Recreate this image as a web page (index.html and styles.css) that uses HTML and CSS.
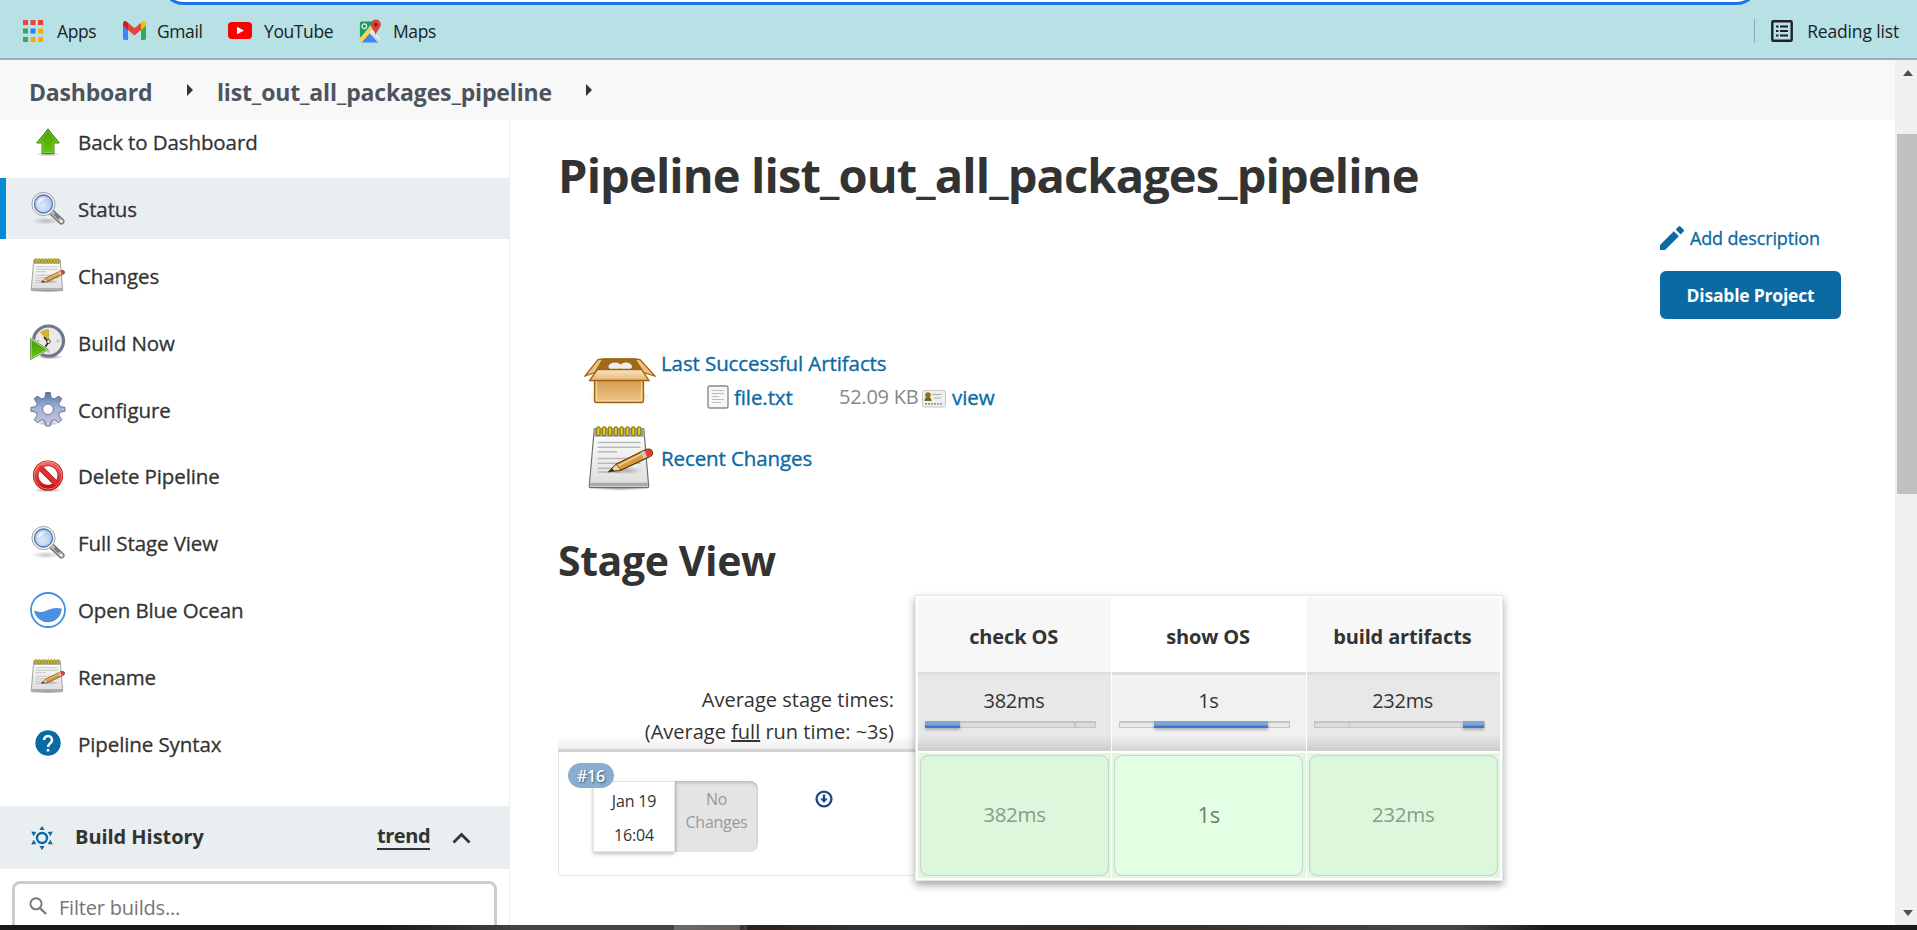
FILE: index.html
```html
<!DOCTYPE html>
<html lang="en">
<head>
<meta charset="utf-8">
<title>list_out_all_packages_pipeline [Jenkins]</title>
<link rel="stylesheet" href="styles.css">
</head>
<body>
<svg class="defs" width="0" height="0">
  <defs>
    <linearGradient id="gGreen" x1="0" y1="0" x2="0" y2="1"><stop offset="0" stop-color="#4b9a08"/><stop offset="1" stop-color="#62c808"/></linearGradient>
    <linearGradient id="gPaper" x1="0" y1="0" x2="0" y2="1"><stop offset="0" stop-color="#ffffff"/><stop offset="1" stop-color="#dcdcdc"/></linearGradient>
    <linearGradient id="gGear" x1="0" y1="0" x2="0" y2="1"><stop offset="0" stop-color="#5577a8"/><stop offset=".45" stop-color="#a0b2d4"/><stop offset="1" stop-color="#cfc2e6"/></linearGradient>
    <linearGradient id="gRed" x1="0" y1="0" x2="0" y2="1"><stop offset="0" stop-color="#f06a6a"/><stop offset="1" stop-color="#cc1010"/></linearGradient>
    <linearGradient id="gBox" x1="0" y1="0" x2="0" y2="1"><stop offset="0" stop-color="#c88f3c"/><stop offset="1" stop-color="#efc58a"/></linearGradient>
    <linearGradient id="gFlap" x1="0" y1="0" x2="0" y2="1"><stop offset="0" stop-color="#fbe6c6"/><stop offset="1" stop-color="#e6b673"/></linearGradient>
    <radialGradient id="gLens" cx=".45" cy=".6" r=".6"><stop offset="0" stop-color="#dfeafa"/><stop offset="1" stop-color="#a9c4e8"/></radialGradient>
    <radialGradient id="gShade"><stop offset="0" stop-color="#000" stop-opacity=".4"/><stop offset="1" stop-color="#000" stop-opacity="0"/></radialGradient>
    <symbol id="magnifier" viewBox="0 0 36 36">
      <ellipse cx="16" cy="30" rx="15" ry="3.6" fill="url(#gShade)" opacity=".55"/>
      <path d="M22 21.5 31.5 30.5" stroke="#6f6f6f" stroke-width="6" stroke-linecap="round"/>
      <path d="M22 21.5 31.5 30.5" stroke="#bdbdbd" stroke-width="3.6" stroke-linecap="round"/>
      <path d="M24.5 23 29 27.400" stroke="#777" stroke-width="2.4"/>
      <circle cx="31.300" cy="30.300" r="1.500" fill="#eee"/>
      <circle cx="13.500" cy="13" r="11.600" fill="#f2f2f0" stroke="#8d8f8c" stroke-width=".8"/>
      <circle cx="13.500" cy="13" r="9" fill="url(#gLens)" stroke="#4a77b4" stroke-width="1.300"/>
      <path d="M7 13a6.500 6.500 0 0 1 9-6c-3 1.500-4 4-9 6z" fill="#fff" opacity=".65"/>
    </symbol>
    <symbol id="notepad" viewBox="0 0 70 70">
      <ellipse cx="34" cy="65.500" rx="31" ry="3.500" fill="url(#gShade)"/>
      <path d="M7.500 5h51l5 59q0 1.500-1.500 1.500H4Q2.200 65.500 2.300 64z" fill="url(#gPaper)" stroke="#6d6f6c" stroke-width="1.200"/>
      <path d="M7.300 6h51.500l.7 7H6.700z" fill="#a5a5a3"/>
      <path d="M3.500 60.500h59v3.500h-59z" fill="#a9a9a9"/>
      <g stroke="#b9b9b9" stroke-width="1.500"><path d="M11 19h44M11 24h44M11 28.500h20M11 35.500h44M11 40.500h44M11 45.500h30M11 49.500h24"/></g>
      <g fill="#e3cf2b" stroke="#8f7a06" stroke-width="1.200"><rect x="10" y="3" width="3.400" height="9" rx="1.700"/><rect x="16" y="3" width="3.400" height="9" rx="1.700"/><rect x="22" y="3" width="3.400" height="9" rx="1.700"/><rect x="28" y="3" width="3.400" height="9" rx="1.700"/><rect x="34" y="3" width="3.400" height="9" rx="1.700"/><rect x="40" y="3" width="3.400" height="9" rx="1.700"/><rect x="46" y="3" width="3.400" height="9" rx="1.700"/><rect x="52" y="3" width="3.400" height="9" rx="1.700"/></g>
      <ellipse cx="40" cy="48" rx="18" ry="4" fill="url(#gShade)" opacity=".6"/>
      <path d="M22.500 49 30 41.500 60 26.500Q65 24.500 67 28q1.500 3.500-2 5.500L35 47.500z" fill="#d79a3e" stroke="#5c3b0a" stroke-width="1.200"/>
      <path d="M32 43 60 29" stroke="#f3cf8c" stroke-width="1.600"/>
      <path d="M22.500 49 30 41.500 35 47.500z" fill="#f0d8a8" stroke="#5c3b0a" stroke-width=".8"/>
      <path d="M22.500 49l3.500-3.300 2 2.500z" fill="#222"/>
      <path d="M57 28.500 60 34.500" stroke="#c9c9c9" stroke-width="4"/>
      <path d="M59.500 27.200Q64.500 24.800 66.500 28.200q1.400 3.300-1.800 4.900l-2.500 1.200z" fill="#ef3438"/>
    </symbol>
  </defs>
</svg>

<header class="bookmarks">
  <div class="omnibox"></div>
  <a class="bm bm-apps"><svg width="20" height="22" viewBox="0 0 20 22"><g fill="#ea4335"><path d="M0 0h5v5H0zM7.500 0h5v5h-5zM15 0h5v5h-5z"/></g><path fill="#34a853" d="M0 8.500h5v5H0zM0 17h5v5H0z"/><path fill="#1a86f0" d="M7.500 8.500h5v5h-5z"/><path fill="#f9ab00" d="M15 8.500h5v5h-5zM7.500 17h5v5h-5zM15 17h5v5h-5z"/></svg><span>Apps</span></a>
  <a class="bm bm-gmail"><svg width="23" height="19" viewBox="0 0 23 17" preserveAspectRatio="none"><path fill="#4285f4" d="M0 3v12.500Q0 17 1.500 17H5V6z"/><path fill="#34a853" d="M23 3v12.500Q23 17 21.500 17H18V6z"/><path fill="#ea4335" d="M5 1.500 11.500 6.500 18 1.500V8l-6.500 5L5 8z"/><path fill="#c5221f" d="M0 2.500Q0 0 2.300 0 3.300 0 5 1.500V8L0 4.300z"/><path fill="#fbbc04" d="M23 2.500Q23 0 20.700 0 19.700 0 18 1.500V8l5-3.700z"/></svg><span>Gmail</span></a>
  <a class="bm bm-yt"><svg width="24" height="17" viewBox="0 0 24 18" preserveAspectRatio="none"><rect width="24" height="18" rx="4" fill="#f00"/><path d="M9 5v8l7-4z" fill="#fff"/></svg><span>YouTube</span></a>
  <a class="bm bm-maps"><svg width="22" height="24" viewBox="0 0 23 24"><path fill="#1e9e57" d="M2 2h13L1 20V3.500z"/><path fill="#fcd34d" d="M0 20 14 6l3 4L3 24H1.500z"/><path fill="#e8eaed" d="M11 13l4-3 7 10v2z"/><path fill="#4285f4" d="M11 14.500 20 24H3z"/><circle cx="5.500" cy="7" r="2.400" fill="none" stroke="#e6f4ea" stroke-width="1.300"/><path fill="#db4437" d="M17.500 0a5.300 5.300 0 0 1 5.300 5.300c0 4-4.300 6-5.300 11.200-1-5.200-5.300-7.200-5.300-11.200A5.300 5.300 0 0 1 17.500 0z"/><circle cx="17.500" cy="5.400" r="1.900" fill="#7b1f18"/></svg><span>Maps</span></a>
  <div class="reading"><svg width="22" height="22" viewBox="0 0 22 22"><rect x="1.300" y="1.300" width="19.400" height="19.400" rx="1" fill="none" stroke="#202124" stroke-width="2.400"/><path stroke="#202124" stroke-width="2.200" d="M5 6.500h2.500M9 6.500h8M5 11h2.500M9 11h8M5 15.500h2.500M9 15.500h8"/></svg><span>Reading list</span></div>
</header>

<div class="viewport">
  <div class="page">
    <nav class="crumbs">
      <a class="crumb-a">Dashboard</a><i class="tri"></i><a class="crumb-b">list_out_all_packages_pipeline</a><i class="tri"></i>
    </nav>
    <div class="columns">
      <aside class="side">
        <ul class="tasks">
          <li><span class="ico"><svg width="24" height="28" viewBox="0 0 24 28"><ellipse cx="12" cy="26" rx="12" ry="2.500" fill="url(#gShade)"/><path d="M12 .8 23.300 15H18v10.500H6V15H.7z" fill="url(#gGreen)" stroke="#3d7d0a" stroke-width=".9"/><path d="M12 2.600 21 14h-4v10.500H7V14H3z" fill="none" stroke="#9be05a" stroke-width=".8" opacity=".7"/></svg></span><span>Back to Dashboard</span></li>
          <li class="on"><span class="ico"><svg width="36" height="36"><use href="#magnifier"/></svg></span><span>Status</span></li>
          <li><span class="ico"><svg width="36" height="36"><use href="#notepad"/></svg></span><span>Changes</span></li>
          <li><span class="ico"><svg width="36" height="36" viewBox="0 0 36 36"><ellipse cx="20" cy="33" rx="14" ry="2.500" fill="url(#gShade)"/><circle cx="18.500" cy="17" r="15" fill="#e9e9e6" stroke="#73738f" stroke-width="3.200"/><path d="M18.500 17.500 10 8.500Q13.500 5 18.500 5z" fill="#d3b23c"/><path d="M18.500 17v-11" stroke="#c8a93c" stroke-width="1"/><path d="M18.500 18 14.500 24M18 18l-4-5" stroke="#222" stroke-width="1.600"/><circle cx="18.500" cy="17.500" r="1.800" fill="#fff" stroke="#333"/><circle cx="28" cy="17" r="1.300" fill="#bbb"/><circle cx="8" cy="17" r="1.300" fill="#bbb"/><circle cx="18.500" cy="27.500" r="1.300" fill="#bbb"/><path d="M.6 14.500 18.500 25.500.6 35.500z" fill="url(#gGreen)" stroke="#fff" stroke-width="1.600"/><path d="M.6 14.500 18.500 25.500.6 35.500z" fill="none" stroke="#3b7a10" stroke-width=".8"/></svg></span><span>Build Now</span></li>
          <li><span class="ico"><svg width="36" height="36" viewBox="0 0 36 36"><ellipse cx="18" cy="32" rx="12" ry="3" fill="url(#gShade)"/><g fill="url(#gGear)"><path stroke="#5a6c92" stroke-width=".9" fill-rule="evenodd" d="M15.800 1.500h4.400l1 5.200 3 1.300 4.600-3 3 3-3 4.600 1.200 3 5 .8v3.800l-5 1-1.200 3 3 4.500-3 3-4.500-3-3 1.300-1.100 5h-4.400l-1-5-3-1.300-4.600 3-3-3 3-4.500-1.300-3-5-1v-3.800l5-.8 1.300-3-3-4.600 3-3 4.600 3 3-1.300zM18 13a5.300 5.300 0 1 0 0 10.600A5.300 5.300 0 0 0 18 13z"/></g></svg></span><span>Configure</span></li>
          <li><span class="ico"><svg width="32" height="32" viewBox="0 0 32 32"><ellipse cx="16" cy="30" rx="15" ry="2.500" fill="url(#gShade)"/><circle cx="16" cy="15.500" r="12.300" fill="#fff" stroke="#b31212" stroke-width="5.600"/><path d="M7.500 7 24.500 24" stroke="#b31212" stroke-width="5.400"/><circle cx="16" cy="15.500" r="12.300" fill="none" stroke="url(#gRed)" stroke-width="4.300"/><path d="M7.500 7 24.500 24" stroke="#e03030" stroke-width="4"/><circle cx="16" cy="15.500" r="13.700" fill="none" stroke="#f79a9a" stroke-width=".7"/></svg></span><span>Delete Pipeline</span></li>
          <li><span class="ico"><svg width="36" height="36"><use href="#magnifier"/></svg></span><span>Full Stage View</span></li>
          <li><span class="ico"><svg width="36" height="36" viewBox="0 0 36 36"><circle cx="18" cy="18" r="17" fill="#fff" stroke="#4a90e2" stroke-width="1.800"/><path fill="#4a90e2" d="M4 18.500c4 1.800 8 2 12 .3 4.500-2 8.500-4 15.800-2.200A14 14 0 0 1 4 18.500z"/></svg></span><span>Open Blue Ocean</span></li>
          <li><span class="ico"><svg width="36" height="36"><use href="#notepad"/></svg></span><span>Rename</span></li>
          <li><span class="ico"><svg width="26" height="26" viewBox="0 0 26 26"><circle cx="13" cy="13" r="12.700" fill="#0b6aa2"/><path d="M9 10a4 4 0 1 1 6.500 3.100C14 14.200 13 15 13 17" fill="none" stroke="#fff" stroke-width="2.500"/><path d="M11.700 19h2.600v2.500h-2.600z" fill="#fff"/></svg></span><span>Pipeline Syntax</span></li>
        </ul>
        <div class="history">
          <svg width="24" height="24" viewBox="0 0 24 24"><circle cx="12" cy="12" r="5" fill="none" stroke="#0b6aa2" stroke-width="2.400"/><path fill="#0b6aa2" d="M12 0l2.600 4H9.400zM12 24l2.600-4H9.400zM1.200 5.500 6.300 6 3.600 10.200zM1.200 18.500 6.300 18 3.600 13.800zM22.800 5.500 17.700 6l2.700 4.200zM22.800 18.500 17.700 18l2.700-4.200z"/></svg>
          <b>Build History</b><a>trend</a>
          <svg class="chev" width="19" height="12" viewBox="0 0 19 12"><path d="M1.500 10.500l8-8 8 8" fill="none" stroke="#333" stroke-width="2.800"/></svg>
        </div>
        <div class="filter"><svg width="18" height="18" viewBox="0 0 18 18"><circle cx="7" cy="6.800" r="5.600" fill="none" stroke="#757575" stroke-width="1.900"/><path d="M11 11l6 6" stroke="#757575" stroke-width="2.200"/></svg><span>Filter builds...</span></div>
      </aside>
      <main class="main">
        <h1>Pipeline list_out_all_packages_pipeline</h1>
        <div class="actions">
          <a class="add"><svg width="24" height="24" viewBox="0 0 24 24"><path fill="#0b6aa2" d="M0 19v5h5L18.800 10.200l-5-5zM23.500 5.400q1-1 0-1.900L20.500.5q-1-1-1.900 0l-2.900 2.900 5 5z"/></svg><span>Add description</span></a>
          <a class="btn">Disable Project</a>
        </div>
        <div class="arts">
          <svg class="boxico" width="72" height="60" viewBox="0 0 72 60"><ellipse cx="36" cy="47" rx="33" ry="7" fill="url(#gShade)" opacity=".6"/><path d="M10.500 22h49v28.500q0 2-2 2h-45q-2 0-2-2z" fill="url(#gBox)" stroke="#a2630c" stroke-width="1.300"/><path d="M12.500 24v26.500h45V24" fill="none" stroke="#f6d9a8" stroke-width=".9"/><path d="M19 9h32l8 12H10z" fill="#a06a1e" stroke="#a2630c"/><g fill="#eee"><ellipse cx="31" cy="16.500" rx="6.500" ry="4"/><ellipse cx="42" cy="16.500" rx="6" ry="4"/></g><path d="M19 9 14 9.500 1 26l10-3.500zM51 9l5 .500L71 26 59.500 22.500z" fill="#ecc28a" stroke="#a2630c" stroke-width="1.300"/><path d="M19 9h32" stroke="#a2630c" stroke-width="1.500"/><path d="M13.500 19.500h44L65 30.500H5.500z" fill="url(#gFlap)" stroke="#a2630c" stroke-width="1.300"/></svg>
          <div class="artlist">
            <a class="l1">Last Successful Artifacts</a>
            <div class="file"><svg width="22" height="24" viewBox="0 0 22 24"><rect x="1" y="1" width="20" height="22" rx="1.500" fill="#f6f6f6" stroke="#8a8c89" stroke-width="1.400"/><path stroke="#bdbdbd" stroke-width="1.100" d="M5 5.500h12M5 8.500h12M5 11.500h7M5 14.500h12M5 17.500h9"/></svg><a class="l2">file.txt</a><span class="size">52.09 KB</span><svg class="card" width="24" height="18" viewBox="0 0 24 18"><rect x=".5" y=".5" width="23" height="16.500" rx="1.500" fill="#efefef" stroke="#c6c6c6"/><circle cx="6" cy="5" r="2.800" fill="#a5681c"/><path d="M2.500 11q0-4 3.500-4t3.500 4z" fill="#4c7a1c"/><path d="M10.500 4.500h9M12 8h7" stroke="#aaa"/><path d="M3 13.800h18" stroke="#777" stroke-width="1.300" stroke-dasharray="2 1"/></svg><a class="l3">view</a></div>
          </div>
        </div>
        <div class="recent"><svg width="70" height="68" viewBox="0 0 70 70"><use href="#notepad"/></svg><a>Recent Changes</a></div>
        <h2>Stage View</h2>
        <section class="stage">
          <div class="runs">
            <div class="avg"><span>Average stage times:</span><span>(Average <u>full</u> run time: ~3s)</span></div>
            <div class="run">
              <div class="date"><span>Jan 19</span><span>16:04</span><em class="badge">#16</em></div>
              <div class="nochg">No<br>Changes</div>
              <svg class="dl" width="18" height="18" viewBox="0 0 18 18"><circle cx="9" cy="9" r="7.400" fill="#fff" stroke="#204a87" stroke-width="2.400"/><path d="M7.800 4.500h2.400v4h2.600L9 13 5.200 8.500h2.600z" fill="#204a87"/></svg>
            </div>
          </div>
          <div class="grid">
            <div class="col"><div class="hd">check OS</div><div class="tm"><span>382ms</span><div class="bar"><i style="width:35px"></i><s style="margin-left:113px"></s></div></div><div class="ok"><div>382ms</div></div></div>
            <div class="col mid"><div class="hd">show OS</div><div class="tm"><span>1s</span><div class="bar"><i style="width:114px;margin-left:35px"></i></div></div><div class="ok"><div>1s</div></div></div>
            <div class="col"><div class="hd">build artifacts</div><div class="tm"><span>232ms</span><div class="bar"><s style="margin-left:34px"></s><i style="width:22px;margin-left:113px"></i></div></div><div class="ok"><div>232ms</div></div></div>
          </div>
        </section>
      </main>
    </div>
  </div>
  <div class="scroll"><i class="up"></i><div class="thumb"></div><i class="down"></i></div>
</div>
<footer class="taskbar"></footer>
</body>
</html>
```
FILE: styles.css
```css
* { box-sizing: border-box; }
html, body { margin: 0; height: 930px; overflow: hidden; }
body {
  display: flex; flex-direction: column; background: #fff; color: #333;
  font-family: "Open Sans", "Noto Sans", sans-serif; font-size: 20px; white-space: nowrap;
}
svg { display: block; flex: none; }
.defs { position: absolute; }
h1, h2, ul { margin: 0; padding: 0; }

.bookmarks {
  position: relative; flex: none; height: 60px; display: flex; align-items: center;
  padding: 3px 18px 0 23px; background: #b7e1e4; border-bottom: 2px solid #8fb3b8;
  font-size: 17.5px; color: #202124; overflow: hidden;
}
.omnibox {
  position: absolute; left: 161px; top: -40px; width: 1598px; height: 45px;
  border: 3px solid #1a73e8; border-radius: 23px; background: #fff;
}
.bm { display: flex; align-items: center; letter-spacing: -0.4px; }
.bm-apps { width: 100px; gap: 14px; }
.bm-gmail { width: 105px; gap: 11px; }
.bm-yt { width: 131px; gap: 12px; }
.bm-maps { gap: 12px; }
.reading {
  margin-left: auto; display: flex; align-items: center; gap: 14px; height: 24px;
  padding-left: 16px; border-left: 1px solid #8aa9ac; letter-spacing: -0.15px;
}

.viewport { display: flex; height: 865px; flex: none; }
.page { width: 1895px; height: 865px; overflow: hidden; }
.crumbs {
  height: 60px; padding-left: 29px; display: flex; align-items: center;
  background: #f8f8f8; color: #4d545d; font-weight: 700; font-size: 23px; line-height: 60px;
}
.crumb-a { width: 158px; letter-spacing: -0.2px; padding-top: 3px; }
.crumb-b { width: 369px; margin-left: 24px; letter-spacing: -0.15px; padding-top: 3px; }
.tri { border-left: 6px solid #333; border-top: 6px solid transparent; border-bottom: 6px solid transparent; }

.columns { display: flex; height: 805px; }
.side { width: 510px; border-right: 1px solid #e9eef0; overflow: hidden; flex: none; }
.tasks { list-style: none; height: 686px; display: flow-root; }
.tasks li {
  display: flex; align-items: center; height: 61px; margin-bottom: 5.85px; padding-left: 30px;
  font-size: 20.5px; letter-spacing: -0.1px; -webkit-text-stroke: 0.3px #333;
}
.tasks li:first-child { margin-top: -8.85px; }
.tasks li.on { background: #e9eef1; border-left: 6px solid #0389d6; padding-left: 24px; }
.tasks li span:last-child { padding-top: 1px; }
.ico { width: 36px; margin-right: 12px; display: flex; justify-content: center; }
.history {
  height: 63px; display: flex; align-items: center; padding-left: 30px; background: #e9eef1;
  font-size: 20px; letter-spacing: -0.05px;
}
.history b { width: 302px; margin-left: 21px; padding-bottom: 3px; }
.history a {
  width: 53px; font-weight: 700; border-bottom: 2px solid #333; line-height: 25px;
  margin-bottom: 3px; margin-right: 22px; letter-spacing: -0.45px;
}
.history b, .history a { flex: none; }
.filter {
  margin: 12px 12px 0; height: 60px; border: 3px solid #ccc; border-radius: 8px;
  display: flex; align-items: flex-start; padding: 13px 0 0 14px; gap: 12px;
  color: #757575; font-size: 20px; letter-spacing: -0.2px; line-height: 21px;
}

.main { width: 1385px; padding: 25px 54px 0 48px; }
h1 { font-size: 47px; line-height: 60px; letter-spacing: -0.87px; }
.actions { width: 181px; margin-left: auto; padding-top: 21px; color: #0b6aa2; }
.add {
  display: flex; align-items: center; height: 24px; gap: 6px; font-size: 18px;
  letter-spacing: -0.15px; -webkit-text-stroke: 0.3px #0b6aa2;
}
.btn {
  display: block; margin-top: 21px; height: 48px; line-height: 49px; border-radius: 6px;
  background: #0b6aa2; color: #fff; font-weight: 700; font-size: 17.5px; text-align: center; letter-spacing: -0.2px;
}
.arts { display: flex; margin-top: 27px; height: 68px; padding-left: 26px; line-height: 34px; }
.arts a, .recent a { color: #0b6aa2; font-size: 20.5px; letter-spacing: -0.1px; -webkit-text-stroke: 0.35px #0b6aa2; }
.boxico { margin-top: 4px; }
.artlist { margin-left: 5px; }
.l1 { display: block; }
.file { display: flex; align-items: center; padding-left: 46px; }
.l2 { width: 105px; margin-left: 5px; }
.size { width: 83px; color: #888; letter-spacing: -0.25px; }
.card { margin-top: 3px; }
.l3 { margin-left: 6px; }
.recent { display: flex; align-items: center; margin-top: 10px; height: 68px; padding-left: 28px; gap: 5px; }
h2 { margin-top: 43px; font-size: 41px; line-height: 50px; letter-spacing: -0.4px; }

.stage { display: flex; margin-top: 10px; }
.runs { width: 357px; height: 281px; }
.avg {
  height: 157px; padding: 89px 21px 0 0; text-align: right; line-height: 32px;
  border-bottom: 3px solid #d3d3d3; letter-spacing: 0;
  background: linear-gradient(to top, #eeeeee, #fff 14px);
}
.avg span { display: block; }
.run {
  height: 124px; border: 1px solid #e6e6e6; border-width: 0 0 1px 1px;
  display: flex; padding: 29px 0 0 34px;
}
.date {
  position: relative; width: 82px; height: 71px; background: #fff; border: 1px solid #e4e4e4;
  box-shadow: 0 2px 4px rgba(0,0,0,.25); font-size: 16px; line-height: 34px;
  display: flex; flex-direction: column; align-items: center; letter-spacing: -0.2px; padding-top: 2px;
}
.badge {
  position: absolute; left: -26px; top: -19px; width: 46px; height: 25px; border-radius: 13px;
  background: #8aaed2; color: #fff; font-style: normal; font-weight: 600; line-height: 26px; text-align: center;
  text-shadow: 1px 1px 2px #356;
}
.nochg {
  width: 83px; height: 71px; background: #e4e4e4; color: #999; border-radius: 0 8px 8px 0;
  box-shadow: inset 0 2px 3px #bbb; font-size: 16px; line-height: 23px; text-align: center; padding-top: 7px; letter-spacing: -0.3px;
}
.dl { margin: 9px 0 0 57px; }

.grid {
  display: flex; gap: 1px; width: 588px; height: 286px; padding: 2px; background: #fff;
  border: 1px solid #e3e8ea; box-shadow: 0 4px 8px rgba(0,0,0,.35);
}
.col { width: 194px; text-align: center; }
.hd { height: 77px; padding: 3px 2px 0 0; line-height: 71px; background: #f7f7f7; border-bottom: 3px solid #dedede; font-weight: 700; font-size: 20px; letter-spacing: -0.15px; }
.tm { height: 76px; padding: 12px 7px 0; background: linear-gradient(#e8e8e8 0, #e8e8e8 60px, #cbcbcb 76px); letter-spacing: -0.3px; }
.tm span { display: block; width: 178px; line-height: 27px; }
.bar { width: 171px; height: 7px; margin-top: 7px; display: flex; background: #dcdcdc; border: solid #c4c4c4; border-width: 2px 1px 1px; }
.bar i { height: 7px; margin-top: -2px; background: linear-gradient(#7da7d0 55%, #4176d4 75%); box-shadow: 0 2px 3px rgba(0,0,0,.25); }
.bar i:first-child { position: relative; left: -1px; }
.bar s { width: 2px; background: #c4c4c4; }
.ok { margin-top: 2px; height: 125px; padding: 2px; background: #dff8df; }
.ok div {
  width: 189px; height: 121px; line-height: 117px; border: 1px solid #c8d6cc; border-radius: 8px;
  box-shadow: inset 0 0 1px #b8c8c0; background: #ddf7dc; color: #8a9c8a; font-size: 20.5px; letter-spacing: -0.3px;
}
.mid .hd { background: #fff; }
.mid .tm { background: linear-gradient(#f1f1f1 0, #f1f1f1 60px, #d3d3d3 76px); }
.mid .bar { background: #e8e8e8; }
.mid .ok div { background: #e3ffe3; color: #6f806f; font-size: 22px; }

.scroll { width: 22px; background: #f0f0f0; display: flex; flex-direction: column; align-items: flex-end; }
.thumb { width: 20px; height: 360px; margin-top: 58px; background: #c1c1c1; }
.up, .down { border: 5.5px solid transparent; border-top: 0; border-bottom: 6px solid #505050; margin: 10px 4px 0 0; }
.down { border-bottom: 0; border-top: 6px solid #505050; margin-top: auto; margin-bottom: 9px; }
.taskbar {
  flex: none; height: 5px;
  background: linear-gradient(90deg, #171a19 0, #171a19 380px, #444 520px, #444 674px, #6a6a6a 674px, #6b5f5a 740px, #3a3032 740px, #4a4042 747px, #2e201b 747px, #322622 790px, #2f3235 860px, #2f3235 930px, #35291f 1100px, #444 1400px, #444 1460px, #1a1a1a 1545px);
}
```
